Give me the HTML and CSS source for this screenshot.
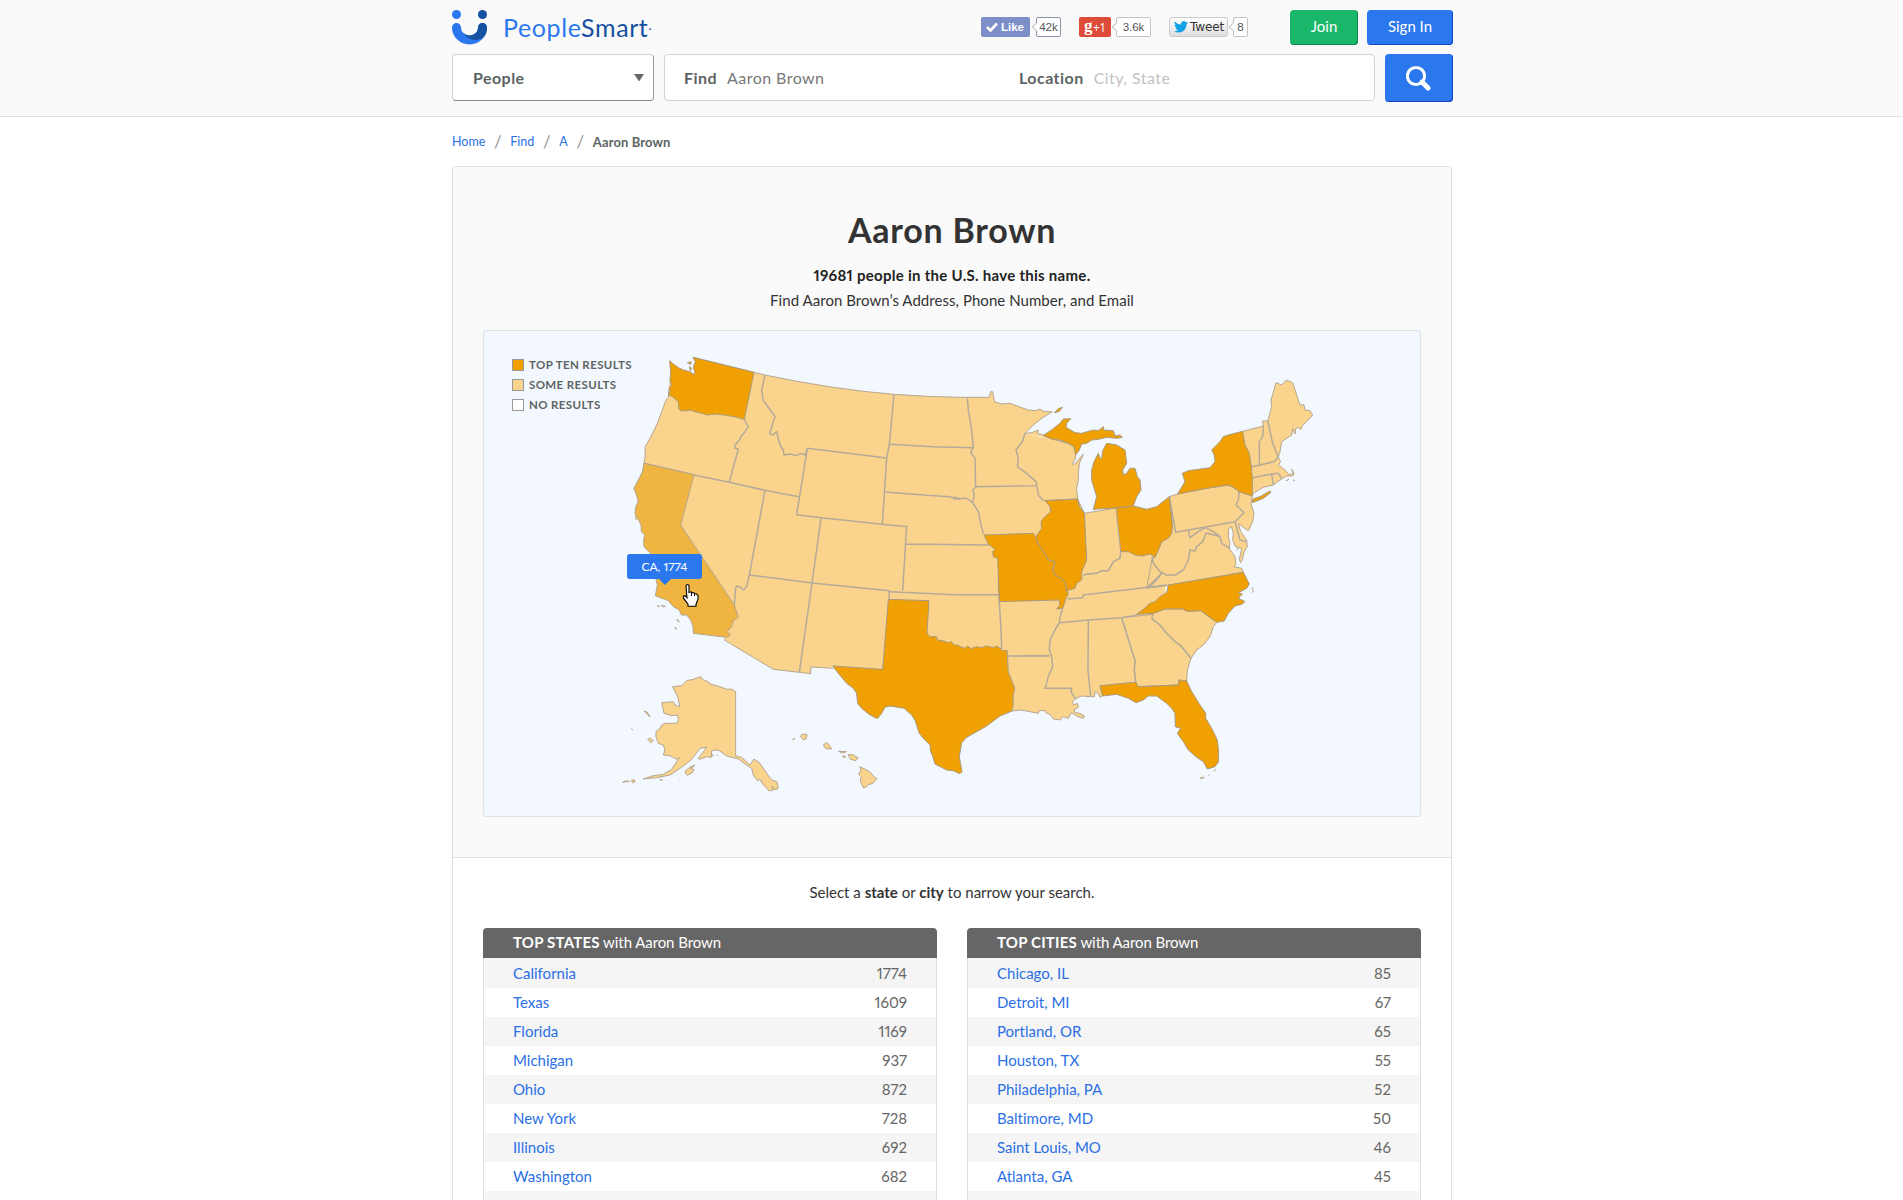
FILE: index.html
```html
<!DOCTYPE html>
<html lang="en">
<head>
<meta charset="utf-8">
<title>Aaron Brown | PeopleSmart</title>
<link rel="stylesheet" href="styles.css">
</head>
<body>
<header class="header">
  <div class="wrap">
    <div class="topbar">
      <a class="logo">
        <svg width="36" height="35" viewBox="0 0 36 35">
          <circle cx="4.5" cy="4.5" r="4.5" fill="#2b78ee"/>
          <circle cx="30.5" cy="4.5" r="4.5" fill="#1650a0"/>
          <path d="M4.500 17.500a13 12.500 0 0 0 26 0" fill="none" stroke="#2b78ee" stroke-width="9" stroke-linecap="round"/>
          <path d="M26 17.500a4.500 4.500 0 0 1 9 0c0 4-1 7-3 9-5 5-15 5-20-3 5 4 14 2 14-6z" fill="#1650a0"/>
        </svg>
        <span class="wordmark">People<b>Smart</b><i>·</i></span>
      </a>
      <div class="social">
        <span class="like"><svg width="12" height="10" viewBox="0 0 12 10"><path d="M1 5l3.5 3.5L11 1.5" fill="none" stroke="#fff" stroke-width="2.6"/></svg>Like</span><span class="count fb">42k</span>
        <span class="gplus"><em>g</em>+1</span><span class="count gp">3.6k</span>
        <span class="tweet"><svg width="14" height="12" viewBox="0 0 14 12"><path d="M14 1.5c-.5.3-1 .5-1.600.5.500-.3 1-.9 1.200-1.500-.6.300-1.200.600-1.800.700A2.800 2.800 0 0 0 6.900 3.600C4.500 3.500 2.500 2.400 1 .600c-.8 1.300-.4 2.900.8 3.800-.4 0-.9-.1-1.200-.3 0 1.400.9 2.500 2.200 2.800-.4.100-.8.100-1.200 0 .4 1.200 1.400 2 2.600 2C3 9.900 1.500 10.300 0 10.200 5.500 13.500 12.600 10.300 12.600 3.300 13.200 2.800 13.600 2.200 14 1.500z" fill="#12a3e6"/></svg>Tweet</span><span class="count tw">8</span>
      </div>
      <a class="btn join">Join</a>
      <a class="btn signin">Sign In</a>
    </div>
    <div class="search">
      <div class="select"><b>People</b><svg width="10" height="8" viewBox="0 0 10 8"><path d="M0 0h10L5 7.500z" fill="#636968"/></svg></div>
      <div class="fields"><b>Find</b><span class="find">Aaron Brown</span><b>Location</b><span class="loc">City, State</span></div>
      <a class="go"><svg width="26" height="26" viewBox="0 0 26 26"><circle cx="10" cy="11" r="8.600" fill="none" stroke="#fff" stroke-width="3"/><path d="M16 17l6 6" stroke="#fff" stroke-width="5" stroke-linecap="round"/></svg></a>
    </div>
  </div>
</header>
<main class="wrap main">
  <nav class="crumbs"><a>Home</a><i>/</i><a>Find</a><i>/</i><a>A</a><i>/</i><b>Aaron Brown</b></nav>
  <section class="panel">
    <div class="summary">
      <h1>Aaron Brown</h1>
      <p class="total">19681 people in the U.S. have this name.</p>
      <p class="sub">Find Aaron Brown’s Address, Phone Number, and Email</p>
      <div class="map">
        <svg class="states" width="936" height="485" viewBox="484 331 936 485">
          <path class="land" d="M660 450L675 410 750 380 890 395 960 398 990 400 1020 415 1024 433 1052 440 1070 455 1072 500 1085 520 1160 515 1175 560 1165 590 1180 640 1190 660 1136 681 1101 686 1091 692 1060 695 1000 700 885 669 833 667 811 667 738 642 726 637 700 600 665 500z"/>
          <!-- Northwest -->
          <g transform="translate(620 340) scale(.33333)">
            <path class="coast" d="M48 540L47 515 55 485 50 465 42 445 58 415 68 395 72 370 76 345 75 322 90 295 110 255 125 215 138 180 145 172 149 62 219 52 402 97 435 105 530 124 640 142 730 154 822 163 920 169 1020 172"/>
            <path class="border" d="M373 238L378 248 385 260 375 275 362 290 360 298 345 315 345 325 355 327 350 345 328 426M72 370L222 405 328 427 435 451 537 470M435 105L425 150 430 182 440 195 465 230 460 245 449 280 458 285 470 275 475 295 480 315 490 330 492 345 510 342 530 347 542 340 555 345 562 325 800 354M822 163L808 313 800 354 787 555M562 325L530 524 603 533 787 553M435 451L388 705M808 313L940 320 1059 323M797 456L920 466 990 470 1005 477 1020 476"/>
            <path class="sea" d="M149 62L160 72 175 83 190 90 210 95 222 104 225 95 220 85 222 75 226 65 219 50 180 35 140 55z"/>
            <path class="sea" d="M143 165L152 100 149 60 140 60z"/>
            <path class="top" d="M149 62L160 72 175 83 190 90 210 95 222 104 225 95 220 85 222 75 226 65 219 52 402 97 373 238 350 232 320 226 285 222 262 225 245 220 225 215 210 210 185 213 177 208 175 185 165 176 158 170 145 165 150 155 148 145 155 135 150 120 152 100z"/>
            <path class="top" d="M202 68l12-3-2 8zM208 80l6 4-3 8z"/>
          </g>
          <!-- Southwest -->
          <g transform="translate(620 500) scale(.33333)">
            <path class="coast" d="M320 412L313 420 460 508 538 517 572 521 573 501 640 505"/>
            <path class="border" d="M343 315L347 265 350 258 362 262 370 270 380 260 388 225 576 249 808 272 807 297M603 55L576 249 538 517"/>
            <path class="hover" d="M72-110L222-76 182 75 343 315 355 352 340 362 335 380 322 395 332 405 320 412 220 400 219 380 212 360 200 345 184 345 178 330 160 320 145 302 120 293 106 287 112 255 100 200 95 165 88 157 72 140 71 120 74 105 64 95 63 75 55 58 45 40 47 20 55 5 50-15 42-35 58-65 68-85z"/>
            <path class="isle" d="M112 317l7 1-3 3zM124 316l12 3-6 2zM170 358l8 7-4-1zM165 381l5 7-3-2z"/>
          </g>
          <!-- Plains -->
          <path class="border" d="M882.500 524.500L906.600 526.500 905.500 544 902.700 590.700M905.500 544L989 545"/>
          <!-- Texas and neighbours -->
          <g transform="translate(800 580) scale(.33333)">
            <path class="border" d="M270 35L400 41 460 44 595 44M595 0L598 66 603 150 605 208M625 228L748 227"/>
            <path class="top" d="M265 58L387 62 381 160 390 170 410 170 412 180 430 183 445 188 455 185 462 195 475 195 480 200 495 205 503 198 512 206 530 200 545 203 560 198 580 203 590 198 600 205 608 212 622 212 625 275 637 305 645 325 640 345 640 375 636 393 600 408 560 438 500 472 485 488 478 530 486 575 480 581 460 572 440 570 405 552 397 525 392 515 390 495 370 475 357 458 345 420 335 405 313 385 270 378 255 382 245 400 232 416 210 405 185 385 173 370 170 340 160 325 140 310 115 280 98 258 248 268z"/>
          </g>
          <!-- Northeast -->
          <g transform="translate(1120 370) scale(.33333)">
            <path class="coast" d="M148 380L173 372 260 355 325 345 345 355 357 365 397 378 393 400 402 430 398 455 385 482 370 472 355 460 362 485 380 510 382 530 372 545 368 565 362 578 358 568 365 537 345 528 338 510 340 490 335 470 325 478 325 500 330 520 327 535 345 560 348 583 342 590 365 595 370 607 145 646 80 655 97 563 105 562 125 515 155 490 157 465z"/>
            <path class="coast" d="M368 184L430 168 428 153 443 153 455 110 453 90 462 60 468 38 485 45 500 30 518 38 530 75 540 105 552 105 555 120 570 122 578 135 560 155 548 165 542 180 535 172 527 176 525 192 518 175 515 195 485 215 480 245 475 262 482 275 475 285 495 300 505 312 520 313 515 298 522 310 518 318 500 318 480 330 460 345 430 352 400 370 397 378"/>
            <path class="border" d="M430 168L428 200 418 215 418 283M394 290L420 285 462 275 475 262 458 220 443 153M397 323L455 312 475 310 485 325M455 312L460 345M148 380L167 487 345 455 350 450 372 428 348 405 355 390 357 365M345 455L360 510 380 515M205 482L210 503 235 485 257 473 280 485 300 500 305 520 330 535M300 500L285 495 258 490 248 515 230 530 225 543 210 540 205 570 190 600 165 615 140 615 120 605 100 580 97 563 105 562M125 610L80 655"/>
            <path class="top" d="M173 372L195 335 187 310 205 302 235 298 270 293 285 275 283 255 275 240 300 215 310 200 325 195 368 184 375 225 388 250 394 290 397 325 397 378 357 365 345 355 325 345 260 355z"/>
            <path class="top" d="M397 398L397 388 420 380 450 363 453 367 430 385z"/>
            <path class="top" d="M-12 414L40 408 60 413 80 418 110 410 148 380 157 465 155 490 145 505 125 515 115 540 105 562 90 552 65 558 45 555 25 545 2 545z"/>
            <path class="isle" d="M498 332l8-4-4 4zM520 330l5 2zM396 652q6 8 2 16M350 533l4 8"/>
          </g>
          <!-- Southeast -->
          <g transform="translate(1000 570) scale(.33333)">
            <path class="coast" d="M22 242L25 305 37 335 45 355 40 375 40 405 36 423 60 420 80 423 115 430 118 422 135 422 137 428 150 433 160 447 180 450 190 440 205 445 210 435 215 428 230 438 250 445 253 438 240 430 225 428 222 420 235 412 232 400 220 405 218 395 228 385 245 378 272 380 283 380 285 365 295 370 300 382 308 377 300 347"/>
            <path class="coast" d="M365 143L460 133 455 145 480 165 500 190 520 210 545 230 573 265 562 300 560 333 537 330 535 345 415 350 407 336 403 300 405 272z"/>
            <path class="coast" d="M460 130L495 117 550 117 560 124 602 122 650 157 640 170 630 200 610 225 590 240 573 265 545 230 520 210 500 190 480 165 455 145z"/>
            <path class="border" d="M203 87L248 83 250 75 500 45M180 158L265 150 365 143 410 136M188 117L180 140 178 158 165 180 150 210 148 240 155 260 158 290 145 320 135 355 215 355 213 365 222 380 228 387M24 258L148 257M265 150L264 300 272 378M445 53L470 30 485 10M365 143L405 272 403 300 407 336M455 145L480 165 500 190 520 210 545 230 573 265"/>
            <path class="top" d="M300 347L407 336 415 350 535 345 537 330 560 333 575 365 600 405 617 430 617 445 635 475 652 510 656 545 655 575 645 590 622 597 610 575 590 562 565 540 550 515 532 490 542 475 526 470 525 430 515 415 500 400 470 378 445 378 430 390 408 398 385 385 350 373 308 378z"/>
            <path class="top" d="M410 133L430 118 450 100 465 95 480 80 500 68 505 45 730 7 748 42 740 55 715 68 727 72 715 85 735 95 725 103 705 108 685 130 673 153 650 157 602 122 560 124 550 117 495 117 460 130z"/>
            <path class="isle" d="M600 625l10-4 2 3zM625 616l4-2M640 605l8-8M653 582l2-6"/>
          </g>
          <!-- Great Lakes -->
          <g transform="translate(960 380) scale(.33333)">
            <path class="coast" d="M0 52L88 52 92 35 98 35 103 65 125 72 150 70 190 85 205 90 225 92 240 88 255 95 277 95 245 115 220 135 195 160"/>
            <path class="coast" d="M195 160L215 158 235 150 232 160 250 165 275 177"/>
            <path class="coast" d="M250 166L275 177 325 190 342 200 347 225 345 240 335 252 345 252 370 222 358 250 355 280 355 300 350 325 353 357 250 362"/>
            <path class="coast" d="M353 357L373 400 385 398 468 384 482 515 480 535 460 545 445 572 425 572 410 580 385 582 370 585"/>
            <path class="border" d="M22 55L25 90 35 150 40 203 32 218 45 235 47 320 228 317M47 320L38 330 43 345 38 368 55 395 62 430 70 462M-20 351L0 356 18 354 38 368M195 160L187 185 168 210 175 235 172 260 200 280 228 305 232 325 235 345 250 362M482 515L480 535 460 545 445 572 425 572 410 580 385 582 370 585"/>
            <path class="top" d="M250 166L275 150 300 130 310 117 332 116 320 130 318 142 345 158 365 160 400 150 415 152 430 140 430 150 460 152 465 168 480 165 487 172 470 175 440 172 415 178 395 180 380 190 365 192 358 210 347 225 342 200 325 190 300 180 275 177z"/>
            <path class="top" d="M283 98L295 86 308 82 298 94z"/>
            <path class="top" d="M400 388L410 350 395 300 395 270 402 245 415 220 420 235 425 235 428 212 440 190 470 195 495 210 500 250 488 270 490 285 500 280 510 265 525 265 532 290 540 300 543 330 530 350 520 378 468 384z"/>
            <path class="top" d="M255 362L353 357 358 380 373 400 380 540 365 575 365 600 350 610 345 625 320 632 315 610 310 600 285 585 278 570 285 545 265 540 250 515 232 490 228 470 245 445 243 425 250 415 272 395 270 380z"/>
            <path class="top" d="M72 465L220 460 228 472 232 490 250 515 265 540 285 545 278 570 285 585 310 600 315 610 320 632 325 640 318 655 308 685 290 687 300 675 297 660 118 665 113 535 100 530 98 515 105 508 85 492z"/>
          </g>
          <!-- Alaska and Hawaii -->
          <g transform="translate(610 660) scale(.33333)">
            <path class="coast" d="M188 80L215 77 230 62 250 58 272 50 280 60 295 65 300 72 330 80 350 88 365 87 377 95 377 288 395 292 420 315 432 297 450 310 470 340 485 360 500 365 505 385 495 390 485 378 490 390 478 393 468 382 460 375 450 358 442 362 430 345 425 325 400 308 385 297 350 288 325 270 305 272 304 292 290 290 270 298 265 295 280 275 290 262 270 265 255 285 240 303 210 325 180 345 140 353 100 357 130 347 160 343 185 328 208 293 200 298 182 288 160 285 165 270 160 255 145 250 138 230 138 215 150 205 155 195 165 190 200 190 205 180 203 165 185 167 162 160 155 128 190 125 195 135 210 140 203 110z"/>
            <path class="coast" d="M226 333l12-10 14 6-4 8-16 9-6-6zM240 322l14-7-5 7zM113 237l8-2 9 7-8 6zM103 153l8 3 9 14-8-6zM38 367l8-4 12 1-9 1zM65 360l9 0 1 6-8 2zM571 228l8-6 12 2-2 12-10 3zM548 238l6-3-3 5zM640 255l10-8 7 8 8 12-18-1zM685 274l24 1-12 4zM697 288l10 1-4 5zM714 284l14 0 17 10-9 8-14-4zM750 320l12 6 18 10 12 14 9 6-12 14-14 4-8 8-6 2-10-20 2-14-8-10 8-6z"/>
            <path class="isle" d="M64 205l5 6M148 358l7 1M153 362l5-2M207 359l2 2M306 282l4 8M322 284l0 4"/>
          </g>
          <!-- Pointer -->
          <path d="M686 585.500q1.500-2 3 0v7l1-.5h1.500l1 .7h1.500l1 1h1l2 1.500v4l-2 5v2h-8v-2l-4.500-6v-2l1.500-.5 2 2z" fill="#fff" stroke="#000" stroke-width="1.100"/>
          <path d="M691.500 592v4M694.500 593v3" stroke="#000"/>
        </svg>
        <ul class="legend"><li><i class="many"></i>TOP TEN RESULTS</li><li><i class="some"></i>SOME RESULTS</li><li><i></i>NO RESULTS</li></ul>
        <div class="tip">CA, 1774</div>
      </div>
    </div>
    <div class="narrow">
      <p class="hint">Select a <b>state</b> or <b>city</b> to narrow your search.</p>
      <div class="tables">
        <div class="table">
          <h2><b>TOP STATES</b> with Aaron Brown</h2>
          <ul>
            <li><a>California</a><span>1774</span></li>
            <li><a>Texas</a><span>1609</span></li>
            <li><a>Florida</a><span>1169</span></li>
            <li><a>Michigan</a><span>937</span></li>
            <li><a>Ohio</a><span>872</span></li>
            <li><a>New York</a><span>728</span></li>
            <li><a>Illinois</a><span>692</span></li>
            <li><a>Washington</a><span>682</span></li>
            <li></li>
          </ul>
        </div>
        <div class="table">
          <h2><b>TOP CITIES</b> with Aaron Brown</h2>
          <ul>
            <li><a>Chicago, IL</a><span>85</span></li>
            <li><a>Detroit, MI</a><span>67</span></li>
            <li><a>Portland, OR</a><span>65</span></li>
            <li><a>Houston, TX</a><span>55</span></li>
            <li><a>Philadelphia, PA</a><span>52</span></li>
            <li><a>Baltimore, MD</a><span>50</span></li>
            <li><a>Saint Louis, MO</a><span>46</span></li>
            <li><a>Atlanta, GA</a><span>45</span></li>
            <li></li>
          </ul>
        </div>
      </div>
    </div>
  </section>
</main>
</body>
</html>
```
FILE: styles.css
```css
* { box-sizing: border-box; margin: 0; padding: 0; }
body { background: #fff; font-family: Lato, "Open Sans", sans-serif; font-size: 15px; color: #333; font-variant-numeric: proportional-nums; font-variant-ligatures: none; }
ul { list-style: none; }
svg { display: block; flex: none; }
.wrap { width: 1001px; margin-left: 452px; }

.header { height: 117px; padding-top: 10px; background: #fafafa; border-bottom: 1px solid #e0e0e0; }
.topbar { display: flex; height: 35px; }
.logo { display: flex; width: 529px; }
.wordmark { margin-left: 15px; font-size: 25px; line-height: 34px; letter-spacing: .6px; color: #2b78ee; white-space: nowrap; }
.wordmark b { font-weight: 400; color: #1650a0; }
.wordmark i { font-style: normal; font-size: 12px; line-height: 1; vertical-align: 4px; color: #1650a0; }
.social { display: flex; align-items: flex-start; width: 309px; padding-top: 7px; font-size: 11px; }
.like, .gplus, .tweet { display: flex; align-items: center; height: 20px; border-radius: 2px; white-space: nowrap; }
.like { width: 49px; padding-left: 5px; gap: 3px; background: #7d8fc9; color: #fff; font: bold 11.5px "Liberation Sans", sans-serif; }
.gplus { width: 32px; padding-left: 5px; background: #dd4b39; color: #fff; font: 12px "Open Sans", sans-serif; letter-spacing: -.5px; }
.gplus em { font: bold 17px/14px "Liberation Serif", serif; margin: -3px 1px 0 0; }
.tweet { width: 59px; padding-left: 4px; gap: 2px; border: 1px solid #ccc; border-radius: 3px; background: linear-gradient(#fff, #dedede); color: #333; font: 12px "DejaVu Sans", sans-serif; letter-spacing: -.1px; }
.count { position: relative; height: 20px; border: 1px solid #c4c4c4; border-radius: 2px; background: #fff; color: #555; font: 11.5px/18px "Liberation Sans", sans-serif; text-align: center; }
.count::before { content: ""; position: absolute; left: -4px; top: 6px; width: 5px; height: 5px; border-left: 1px solid #c4c4c4; border-bottom: 1px solid #c4c4c4; background: #fff; transform: rotate(45deg); }
.fb { width: 25px; margin: 0 18px 0 6px; border-color: #8a94a8; }
.gp { width: 35px; margin: 0 18px 0 5px; }
.tw { width: 15px; margin-left: 5px; }
.btn { height: 35px; border-radius: 4px; color: #fff; font-size: 15px; line-height: 33px; text-align: center; }
.join { width: 68px; background: #1ab76a; box-shadow: inset -1px -1px #12864c; }
.signin { width: 86px; margin-left: 9px; background: #2b78ee; box-shadow: inset -1px -1px #1846c8; }

.search { display: flex; gap: 10px; height: 48px; margin-top: 9px; font-size: 16px; letter-spacing: .45px; color: #5c6463; }
.search b { letter-spacing: .45px; }
.select, .fields { display: flex; align-items: center; height: 47px; background: #fff; border: 1px solid #d2d2d2; border-radius: 4px; }
.select { width: 202px; padding: 0 9px 0 20px; justify-content: space-between; border-right-color: #999; border-bottom-color: #888; }
.fields { width: 711px; padding-left: 19px; }
.find { width: 292px; margin-left: 10px; color: #777; }
.loc { margin-left: 10px; color: #c2c2c2; }
.go { display: flex; align-items: center; justify-content: center; width: 68px; height: 48px; border-radius: 4px; background: #2b78ee; box-shadow: inset -1px -1px #1846c8; }

.main { height: 1083px; overflow: hidden; }
.crumbs { display: flex; align-items: center; height: 49px; font-size: 12.5px; line-height: 16px; }
.crumbs a, .table a { color: #2b6fe6; }
.crumbs i { width: 25px; font-style: normal; font-size: 17px; color: #999; text-align: center; }
.crumbs b { font-size: 13px; letter-spacing: .1px; color: #5c6463; }

.panel { width: 1000px; height: 1040px; border: 1px solid #e0e0e0; border-radius: 3px; }
.summary { height: 691px; padding: 0 30px; background: #fafafa; border-bottom: 1px solid #e0e0e0; text-align: center; }
h1 { padding-top: 42px; font-size: 34px; line-height: 42px; letter-spacing: .75px; }
.total { margin-top: 12px; font-weight: 700; line-height: 25px; letter-spacing: .28px; color: #222; }
.sub { line-height: 25px; margin-bottom: 17px; letter-spacing: .05px; }
.map { position: relative; width: 938px; height: 487px; border: 1px solid #dde3e8; border-radius: 3px; background: #f3f8ff; text-align: left; }
.land, .coast { fill: #fad48d; }
.coast, .border, .top, .hover, .isle { stroke-linejoin: round; vector-effect: non-scaling-stroke; }
.coast, .isle { stroke: #b5a68e; stroke-width: 1; }
.border { fill: none; stroke: #b5aa9a; stroke-width: 1.500; }
.sea { fill: #f3f8ff; }
.top { fill: #f0a000; stroke: #a99a80; stroke-width: 1; }
.hover { fill: #f0b540; stroke: #b5a68e; stroke-width: 1; }
.isle { fill: none; }
.legend { position: absolute; left: 28px; top: 24px; color: #5c6463; font-size: 11.5px; font-weight: 700; letter-spacing: .38px; }
.legend li { display: flex; align-items: center; height: 20px; line-height: 18px; white-space: nowrap; }
.legend i { width: 12px; height: 12px; margin-right: 5px; border: 1px solid #999; background: #fff; }
.legend .many { background: #f0a000; }
.legend .some { background: #fad48d; }
.tip { position: absolute; left: 143px; top: 223px; width: 75px; height: 25px; border-radius: 3px; background: #2b78ee; color: #fff; font-size: 12px; line-height: 25px; text-align: center; }
.tip::after { content: ""; position: absolute; left: 32px; top: 25px; border: 6px solid transparent; border-top-color: #2b78ee; border-bottom: 0; }

.narrow { padding: 0 30px; }
.hint { padding-top: 21px; line-height: 26px; margin-bottom: 23px; text-align: center; }
.tables { display: flex; gap: 30px; }
.table { width: 454px; }
.table h2 { height: 30px; padding-left: 30px; border-radius: 4px 4px 0 0; background: #666; color: #fff; font-size: 15px; font-weight: 400; line-height: 29px; letter-spacing: -.08px; }
.table h2 b { letter-spacing: .2px; }
.table ul { border: 1px solid #e0e0e0; border-top: 0; padding-top: 1px; background: #f5f5f5; }
.table li { display: flex; justify-content: space-between; height: 29px; padding: 0 29px; line-height: 28px; }
.table li:nth-child(even) { background: #fff; }
.table span { color: #666; }
```
